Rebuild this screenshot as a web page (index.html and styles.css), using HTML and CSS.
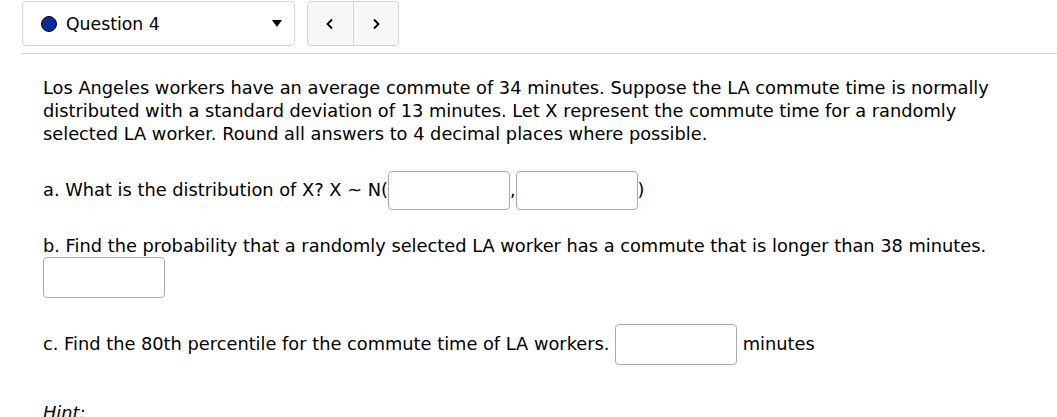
FILE: index.html
```html
<!DOCTYPE html>
<html>
<head>
<meta charset="utf-8">
<link rel="stylesheet" href="styles.css">
</head>
<body>
<div class="toolbar">
  <div class="select">
    <span class="dot"></span>
    <span class="select-label">Question 4</span>
    <span class="caret"></span>
  </div>
  <div class="nav">
    <button class="nav-btn">
      <svg width="10" height="12" viewBox="0 0 10 12"><path d="M7 1.5 L2.5 6 L7 10.5" fill="none" stroke="#000" stroke-width="1.8"/></svg>
    </button>
    <button class="nav-btn">
      <svg width="10" height="12" viewBox="0 0 10 12"><path d="M3 1.5 L7.5 6 L3 10.5" fill="none" stroke="#000" stroke-width="1.8"/></svg>
    </button>
  </div>
</div>
<div class="rule"></div>
<div class="question">
  <p class="intro">Los Angeles workers have an average commute of 34 minutes. Suppose the LA commute time is normally distributed with a standard deviation of 13 minutes. Let X represent the commute time for a randomly selected LA worker. Round all answers to 4 decimal places where possible.</p>
  <p class="part part-a">a. What is the distribution of X? X ~ N(<span class="ans"></span>,<span class="ans"></span>)</p>
  <p class="part part-b">b. Find the probability that a randomly selected LA worker has a commute that is longer than 38 minutes.<br><span class="ans ans-tall"></span></p>
  <p class="part part-c">c. Find the 80th percentile for the commute time of LA workers. <span class="ans ans-tall"></span> minutes</p>
  <p class="hint">Hint:</p>
</div>
</body>
</html>
```
FILE: styles.css
```css
body {
  margin: 0;
  background: #fff;
  color: #000;
  font-family: "DejaVu Sans", sans-serif;
  font-size: 17.8px;
}
.toolbar {
  display: flex;
  gap: 12px;
  padding: 1px 0 0 22px;
}
.select {
  box-sizing: border-box;
  width: 273px;
  height: 45px;
  border: 1px solid #d3d3d3;
  border-radius: 4px;
  display: flex;
  align-items: center;
  padding: 0 12px 0 18px;
}
.dot {
  width: 14px;
  height: 14px;
  border-radius: 50%;
  background: #0a2a9e;
  border: 1px solid #000;
  margin-right: 9px;
}
.select-label {
  flex: 1;
  font-size: 17.3px;
}
.caret {
  width: 0;
  height: 0;
  border-left: 5px solid transparent;
  border-right: 5px solid transparent;
  border-top: 7px solid #000;
}
.nav {
  display: flex;
  box-sizing: border-box;
  width: 92px;
  height: 45px;
  border: 1px solid #d3d3d3;
  border-radius: 4px;
  background: #f7f7f7;
  overflow: hidden;
}
.nav-btn {
  flex: 1;
  border: 0;
  background: transparent;
  padding: 0;
  display: flex;
  align-items: center;
  justify-content: center;
}
.nav-btn + .nav-btn {
  border-left: 1px solid #d3d3d3;
}
.rule {
  margin: 7px 0 0 22px;
  border-top: 1px solid #d3d3d3;
}
.question {
  padding-left: 43px;
  padding-right: 57px;
}
.intro {
  margin: 22px 0 0;
  line-height: 23px;
}
.part {
  margin: 0;
  line-height: 23px;
}
.ans {
  display: inline-block;
  box-sizing: border-box;
  width: 122px;
  height: 39px;
  border: 1px solid #a9a9a9;
  border-radius: 4px;
  vertical-align: middle;
  background: #fff;
}
.ans-tall {
  height: 41px;
}
.part-a {
  margin-top: 26px;
}
.part-b {
  margin-top: 24px;
}
.part-c {
  margin-top: 26px;
}
.hint {
  margin: 37px 0 0;
  font-style: italic;
}
```
